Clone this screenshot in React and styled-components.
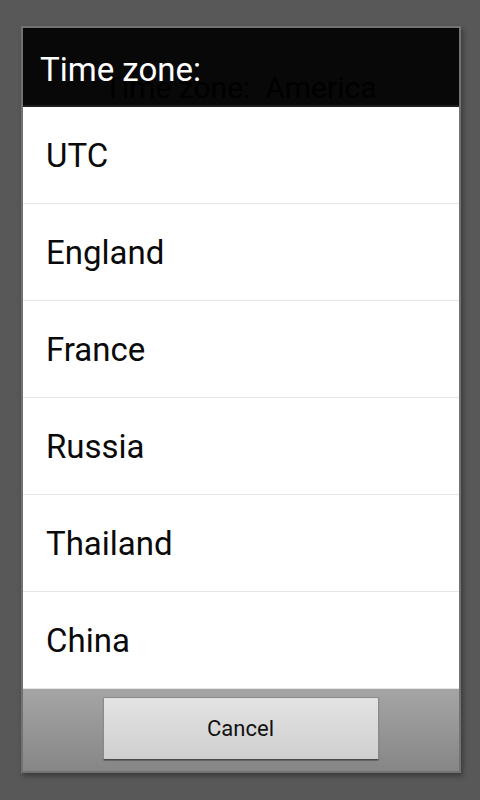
import styled, { createGlobalStyle } from "styled-components";

const GlobalStyle = createGlobalStyle`
  html, body {
    margin: 0;
    padding: 0;
    background: #585858;
  }
  body {
    font-family: Roboto, "Liberation Sans", sans-serif;
  }
`;

const zones = ["UTC", "England", "France", "Russia", "Thailand", "China"];

const App = () => {
  return (
    <>
      <GlobalStyle />
      <Screen>
        <Dialog>
          <TitleBar>
            <Title>Time zone:</Title>
            <Behind>Time zone:&nbsp; America</Behind>
          </TitleBar>
          <ZoneList>
            {zones.map((zone) => (
              <ZoneRow key={zone}>{zone}</ZoneRow>
            ))}
          </ZoneList>
          <ButtonBar>
            <CancelButton>Cancel</CancelButton>
          </ButtonBar>
        </Dialog>
      </Screen>
    </>
  );
};

const Screen = styled.div`
  width: 480px;
  height: 800px;
  box-sizing: border-box;
  padding: 26px 19px 27px 21px;
  background: #585858;
`;

const Dialog = styled.div`
  display: flex;
  flex-direction: column;
  border: 2px solid #727272;
  box-shadow: 2px 3px 5px rgba(0, 0, 0, 0.35);
  background: #fff;
`;

const TitleBar = styled.div`
  position: relative;
  height: 77px;
  display: flex;
  align-items: center;
  padding-left: 17px;
  background: #080808;
  border-bottom: 2px solid #1e1e1e;
`;

const Title = styled.h1`
  position: relative;
  z-index: 1;
  margin: 5px 0 0;
  font-size: 33px;
  font-weight: 400;
  color: #fff;
`;

const Behind = styled.span`
  position: absolute;
  left: 81px;
  top: 42px;
  font-size: 30px;
  line-height: 36px;
  color: #000;
  white-space: nowrap;
`;

const ZoneList = styled.ul`
  list-style: none;
  margin: 0;
  padding: 0;
`;

const ZoneRow = styled.li`
  height: 96px;
  display: flex;
  align-items: center;
  padding-left: 23px;
  border-bottom: 1px solid #e6e6e6;
  font-size: 33px;
  color: #0a0a0a;
`;

const ButtonBar = styled.div`
  height: 82px;
  box-sizing: border-box;
  display: flex;
  justify-content: center;
  align-items: flex-start;
  padding: 8px 0 0;
  background: linear-gradient(#a5a5a5, #868686);
`;

const CancelButton = styled.button`
  width: 276px;
  height: 63px;
  margin-right: 1px;
  border: 1px solid #8a8a8a;
  border-bottom-color: #4a4a4a;
  border-radius: 2px;
  background: linear-gradient(#e3e3e3, #cfcfcf);
  box-shadow: 0 1px 1px rgba(0, 0, 0, 0.3);
  font-family: Roboto, "Liberation Sans", sans-serif;
  font-size: 22px;
  color: #111;
  padding: 0;
`;

export default App;
